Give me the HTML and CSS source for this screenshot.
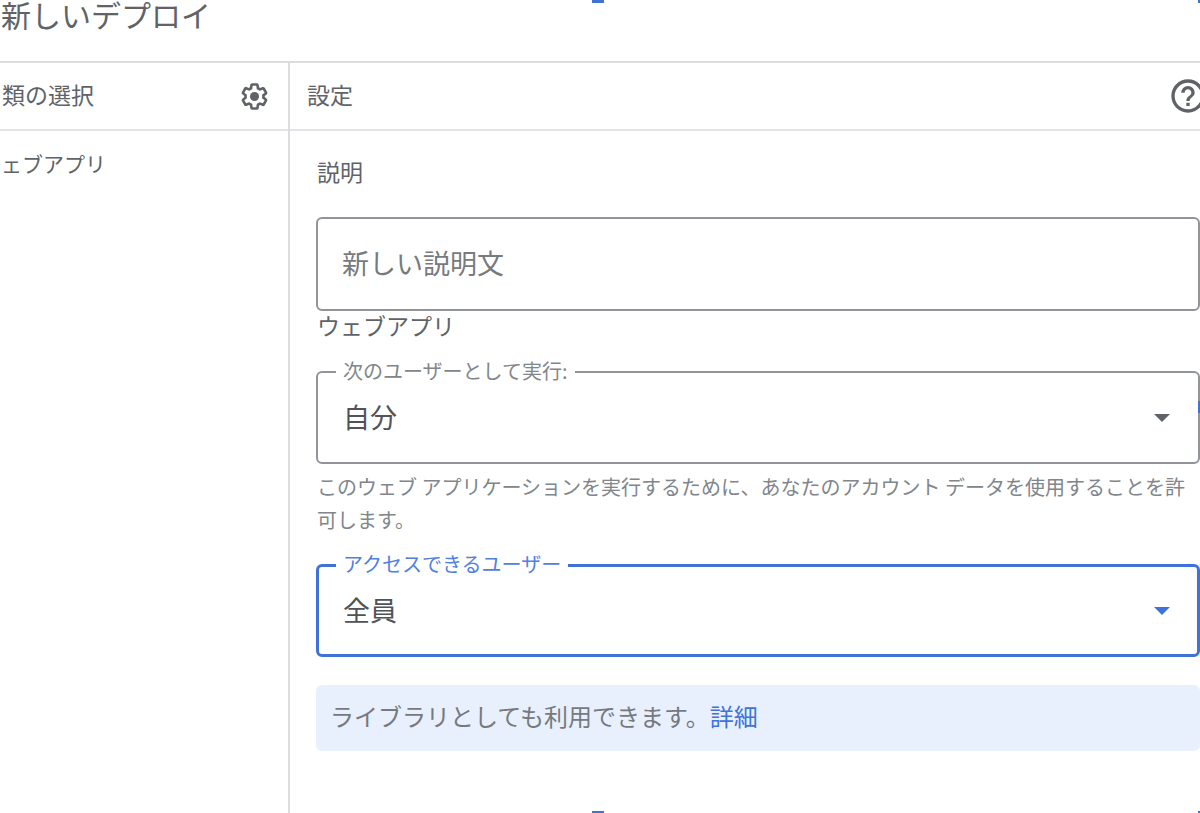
FILE: index.html
```
<!DOCTYPE html>
<html lang="ja">
<head>
    <meta charset="UTF-8">
    <meta name="viewport" content="width=device-width, initial-scale=1.0">
    <title>新しいデプロイ</title>
    <link rel="stylesheet" href="styles.css">
</head>
<body>
    <div class="dialog">
        <h1 class="title">新しいデプロイ</h1>
        <div class="panes">
            <aside class="sidebar">
                <div class="pane-header">
                    <h2>類の選択</h2>
                    <button class="icon-button" type="button" aria-label="種類を有効にする">
                        <svg width="31" height="31" viewBox="0 0 24 24" fill="currentColor">
                            <path d="M13.85 22.25h-3.7c-.74 0-1.36-.54-1.45-1.27l-.27-1.89c-.27-.14-.53-.29-.79-.46l-1.8.72c-.7.26-1.47-.03-1.81-.65L2.2 15.53c-.35-.66-.2-1.44.36-1.88l1.53-1.19c-.01-.15-.02-.3-.02-.46 0-.15.01-.31.02-.46l-1.52-1.19c-.59-.45-.74-1.26-.37-1.88l1.85-3.19c.34-.62 1.11-.9 1.79-.63l1.81.73c.26-.17.52-.32.78-.46l.27-1.91c.09-.7.71-1.25 1.44-1.25h3.7c.74 0 1.36.54 1.45 1.27l.27 1.89c.27.14.53.29.79.46l1.8-.72c.71-.26 1.48.03 1.82.65l1.84 3.18c.36.66.2 1.44-.36 1.88l-1.52 1.19c.01.15.02.3.02.46s-.01.31-.02.46l1.52 1.19c.56.45.72 1.23.37 1.86l-1.86 3.22c-.34.62-1.11.9-1.8.63l-1.8-.72c-.26.17-.52.32-.78.46l-.27 1.91c-.1.68-.72 1.22-1.46 1.22zm-3.23-2h2.76l.37-2.55.53-.22c.44-.18.88-.44 1.34-.78l.45-.34 2.38.96 1.38-2.4-2.03-1.58.07-.56c.03-.26.06-.51.06-.78s-.03-.53-.06-.78l-.07-.56 2.03-1.58-1.39-2.4-2.39.96-.45-.35c-.42-.32-.87-.58-1.33-.77l-.52-.22-.37-2.55h-2.76l-.37 2.55-.53.21c-.44.19-.88.44-1.34.79l-.45.33-2.38-.95-1.39 2.39 2.03 1.58-.07.56a7 7 0 0 0-.06.79c0 .26.02.53.06.78l.07.56-2.03 1.58 1.38 2.4 2.39-.96.45.35c.43.33.86.58 1.33.77l.53.22.38 2.55z"/>
                            <circle cx="12" cy="12" r="3.5"/>
                        </svg>
                    </button>
                </div>
                <ul class="types">
                    <li>ェブアプリ</li>
                </ul>
            </aside>
            <main class="settings">
                <div class="pane-header">
                    <h2>設定</h2>
                    <button class="icon-button help" type="button" aria-label="ヘルプ">
                        <svg width="40" height="40" viewBox="0 0 24 24" fill="currentColor">
                            <path d="M11 18h2v-2h-2v2zm1-16C6.48 2 2 6.48 2 12s4.48 10 10 10 10-4.48 10-10S17.52 2 12 2zm0 18c-4.41 0-8-3.59-8-8s3.59-8 8-8 8 3.59 8 8-3.59 8-8 8zm0-14c-2.21 0-4 1.79-4 4h2c0-1.1.9-2 2-2s2 .9 2 2c0 2-3 1.75-3 5h2c0-2.25 3-2.5 3-5 0-2.21-1.79-4-4-4z"/>
                        </svg>
                    </button>
                </div>
                <form class="form">
                    <label class="section-label" for="description">説明</label>
                    <input class="text-field" type="text" id="description" placeholder="新しい説明文">

                    <h3 class="section-title">ウェブアプリ</h3>
                    <fieldset class="field">
                        <legend><label for="execute-as">次のユーザーとして実行:</label></legend>
                        <div class="select">
                            <select id="execute-as">
                                <option>自分</option>
                            </select>
                            <svg class="arrow" width="16" height="8" viewBox="0 0 16 8" fill="currentColor"><path d="M0 0h16l-8 8z"/></svg>
                        </div>
                    </fieldset>
                    <p class="hint">このウェブ アプリケーションを実行するために、あなたのアカウント データを使用することを許可します。</p>

                    <fieldset class="field active">
                        <legend><label for="access">アクセスできるユーザー</label></legend>
                        <div class="select">
                            <select id="access">
                                <option>全員</option>
                            </select>
                            <svg class="arrow" width="16" height="8" viewBox="0 0 16 8" fill="currentColor"><path d="M0 0h16l-8 8z"/></svg>
                        </div>
                    </fieldset>

                    <p class="note">ライブラリとしても利用できます。<a href="#">詳細</a></p>
                </form>
            </main>
        </div>
        <span class="handle handle-top"></span>
        <span class="handle handle-bottom"></span>
        <span class="handle handle-right"></span>
        <span class="handle handle-top-right"></span>
        <span class="handle handle-corner"></span>
    </div>
</body>
</html>
```
FILE: styles.css
```
* {
    box-sizing: border-box;
}
body {
    margin: 0;
    font-family: "Noto Sans CJK JP", sans-serif;
    font-size: 23px;
    color: #5f6368;
    background: #fff;
}
h1, h2, h3, p, ul {
    margin: 0;
    padding: 0;
    font-weight: normal;
}
.dialog {
    position: relative;
    display: flex;
    flex-direction: column;
    min-height: 100vh;
    overflow: hidden;
}
.title {
    padding: 0 0 33px 1px;
    font-size: 30px;
    line-height: 28px;
}
.panes {
    display: flex;
    flex: 1;
    border-top: 2px solid #dadce0;
}
.sidebar {
    width: 290px;
    flex-shrink: 0;
    border-right: 2px solid #dadce0;
}
.settings {
    flex: 1;
    min-width: 0;
}
.pane-header {
    display: flex;
    align-items: center;
    justify-content: space-between;
    height: 68px;
    padding: 0 18px 0 2px;
    border-bottom: 2px solid #e3e4e8;
}
.pane-header h2 {
    padding-bottom: 4px;
    font-size: 23px;
    line-height: 32px;
}
.settings .pane-header {
    padding: 0 0 0 17px;
}
.icon-button {
    display: flex;
    padding: 0;
    border: none;
    background: none;
    color: #5f6368;
    cursor: pointer;
}
.help {
    margin-right: -8px;
}
.types {
    list-style: none;
    padding: 16px 0 0 1px;
    font-size: 21px;
    line-height: 32px;
}
.form {
    padding: 24px 0 0 26px;
}
.section-label {
    display: block;
    margin-bottom: 30px;
    padding-left: 1px;
    line-height: 32px;
}
.text-field {
    display: block;
    width: 100%;
    height: 94px;
    padding: 0 24px 4px;
    border: 2px solid #919498;
    border-radius: 6px;
    font: inherit;
    font-size: 27px;
    color: #5f6368;
}
.text-field::placeholder {
    color: #777a7e;
}
.section-title {
    margin-bottom: 18px;
    padding-left: 1px;
    font-size: 23px;
    line-height: 28px;
}
.field {
    min-width: 0;
    height: 107px;
    margin: 0;
    padding: 0 0 0 18px;
    border: 2px solid #919498;
    border-radius: 6px;
}
.field legend {
    padding: 0 7px 2px;
    font-size: 20px;
    line-height: 28px;
    color: #80868b;
}
.select {
    display: grid;
    align-items: center;
    height: 62px;
}
.select select {
    grid-area: 1 / 1;
    width: 100%;
    height: 62px;
    padding: 0 48px 4px 7px;
    border: none;
    appearance: none;
    background: none;
    font: inherit;
    font-size: 27px;
    color: #505357;
}
.select .arrow {
    grid-area: 1 / 1;
    justify-self: end;
    margin-right: 28px;
    pointer-events: none;
}
.hint {
    margin: 6px 0 14px;
    padding-left: 1px;
    font-size: 20px;
    line-height: 33px;
    color: #80868b;
}
.active {
    padding-left: 17px;
    border: 3px solid #3f73d9;
}
.active legend {
    color: #4f80e2;
}
.active .arrow {
    margin-right: 27px;
    color: #3f73d9;
}
.note {
    margin-top: 28px;
    padding: 15px 14px 19px;
    border-radius: 6px;
    background: #e8f0fe;
    font-size: 24px;
    line-height: 32px;
    color: #77797d;
}
.note a {
    color: #3f73d9;
    text-decoration: none;
}

/* selection handles */
.handle {
    position: absolute;
    width: 12px;
    height: 12px;
    background: #3f73d9;
}
.handle-top {
    top: -9px;
    left: calc(50% - 8px);
}
.handle-bottom {
    bottom: -10px;
    left: calc(50% - 8px);
}
.handle-right {
    top: calc(50% - 6px);
    right: -10px;
}
.handle-top-right {
    top: -9px;
    right: -10px;
}
.handle-corner {
    right: -10px;
    bottom: -10px;
}
```
